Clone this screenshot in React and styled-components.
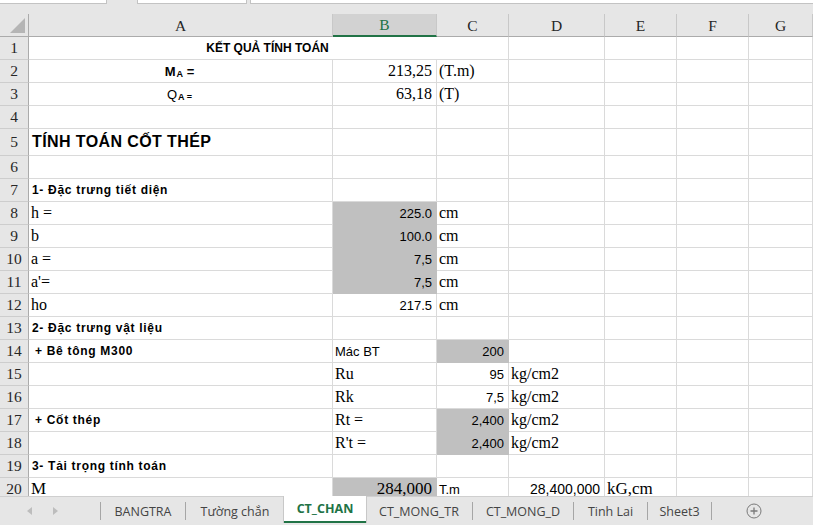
import React from 'react';
import styled, { createGlobalStyle } from 'styled-components';

const SERIF = '"Liberation Serif", "Times New Roman", serif';
const SANS = '"Liberation Sans", Arial, sans-serif';
const UI = '"Open Sans", "Noto Sans", sans-serif';
const COLS = '29px 304px 104px 72px 96px 72px 72px 1fr';
const GREEN = '#217346';

const Global = createGlobalStyle`
  html, body { margin: 0; padding: 0; background: #fff; overflow: hidden; }
  * { box-sizing: border-box; }
`;

const Window = styled.div`
  width: 813px;
  height: 525px;
  display: flex;
  flex-direction: column;
  overflow: hidden;
  background: #fff;
`;

const TopStrip = styled.div`
  height: 14px;
  flex-shrink: 0;
  display: flex;
  align-items: flex-start;
  background: #e6e6e6;
`;

const StripBox = styled.div`
  height: 4px;
  background: #fff;
  border-bottom: 1px solid #c3c3c3;
  border-left: ${p => (p.$left ? '1px solid #c3c3c3' : 'none')};
  border-right: ${p => (p.$right ? '1px solid #c3c3c3' : 'none')};
  width: ${p => (p.$w ? `${p.$w}px` : 'auto')};
  flex: ${p => (p.$w ? '0 0 auto' : '1')};
  margin-left: ${p => p.$gap || 0}px;
`;

const Sheet = styled.div`
  flex: 1;
  overflow: hidden;
`;

const Row = styled.div`
  display: grid;
  grid-template-columns: ${COLS};
  height: ${p => p.$h}px;
`;

const Corner = styled.div`
  background: #e6e6e6;
  border-right: 1px solid #ababab;
  border-bottom: 1px solid #ababab;
  display: flex;
  align-items: flex-end;
  justify-content: flex-end;
  padding: 0 3px 3px 0;
`;

const ColHead = styled.div`
  background: ${p => (p.$sel ? '#d2d2d2' : '#e6e6e6')};
  border-right: 1px solid #c8c8c8;
  border-bottom: ${p => (p.$sel ? `2px solid ${GREEN}` : '1px solid #ababab')};
  color: ${p => (p.$sel ? GREEN : '#262626')};
  font: 15.5px ${SERIF};
  display: flex;
  align-items: center;
  justify-content: center;
  padding-top: 1px;
`;

const RowHead = styled.div`
  background: #e6e6e6;
  border-right: 1px solid #ababab;
  border-bottom: 1px solid #cdcdcd;
  color: #262626;
  font: 15.5px ${SERIF};
  display: flex;
  align-items: center;
  justify-content: center;
`;

const Cell = styled.div`
  grid-column: span ${p => p.$span || 1};
  background: ${p => (p.$fill ? '#c0c0c0' : '#fff')};
  border-right: 1px solid ${p => (p.$fill ? '#c0c0c0' : '#dadada')};
  border-bottom: 1px solid ${p => (p.$fill ? '#c0c0c0' : '#dadada')};
  display: flex;
  align-items: center;
  justify-content: ${p => (p.$align === 'right' ? 'flex-end' : p.$align === 'center' ? 'center' : 'flex-start')};
  padding: 0 ${p => (p.$align === 'right' ? 4 : 2)}px 0 ${p => p.$indent ?? 2}px;
  font-family: ${p => (p.$serif ? SERIF : SANS)};
  font-size: ${p => p.$size || (p.$serif ? 16 : 13)}px;
  font-weight: ${p => (p.$bold ? 700 : 400)};
  letter-spacing: ${p => p.$ls || 0}px;
  color: #000;
  white-space: nowrap;
  overflow: visible;
`;

const Sub = styled.span`
  font-size: 9px;
  font-weight: 700;
  position: relative;
  top: 3px;
  margin-left: 1px;
`;

const TabBar = styled.div`
  height: 29px;
  flex-shrink: 0;
  display: flex;
  align-items: stretch;
  background: #e6e6e6;
  border-top: 1px solid #cfcfcf;
  font-family: ${UI};
`;

const Nav = styled.div`
  width: 100px;
  display: flex;
  align-items: center;
  padding-left: 27px;
  gap: 21px;
`;

const Sep = styled.div`
  width: 1px;
  height: 18px;
  align-self: center;
  background: #a6a6a6;
`;

const Tab = styled.div`
  width: ${p => p.$w}px;
  display: flex;
  align-items: center;
  justify-content: center;
  font-size: 12.5px;
  color: ${p => (p.$active ? GREEN : '#444')};
  font-weight: ${p => (p.$active ? 700 : 400)};
  background: ${p => (p.$active ? '#fff' : 'transparent')};
  border-bottom: ${p => (p.$active ? `2px solid ${GREEN}` : 'none')};
  margin-bottom: ${p => (p.$active ? 2 : 0)}px;
  margin-top: ${p => (p.$active ? -1 : 0)}px;
  box-shadow: ${p => (p.$active ? '1px 0 0 #c8c8c8, -1px 0 0 #c8c8c8' : 'none')};
`;

const AddBtn = styled.div`
  display: flex;
  align-items: center;
  margin-left: 34px;
`;

const Arrow = ({ dir }) => (
  <svg width="5" height="8" viewBox="0 0 5 8">
    <path d={dir === 'l' ? 'M5 0 L0 4 L5 8 Z' : 'M0 0 L5 4 L0 8 Z'} fill="#bdbdbd" />
  </svg>
);

const E = () => <Cell />;

const rowsData = [
  { n: 1, h: 23, cells: [
    <Cell key="a" $span={3} $align="center" $bold $size={12} $indent={0}>KẾT QUẢ TÍNH TOÁN</Cell>,
  ] },
  { n: 2, h: 23, cells: [
    <Cell key="a" $align="center" $bold $size={13} $indent={0}>M<Sub>A</Sub>&nbsp;=</Cell>,
    <Cell key="b" $align="right" $serif>213,25</Cell>,
    <Cell key="c" $serif>(T.m)</Cell>,
  ] },
  { n: 3, h: 23, cells: [
    <Cell key="a" $align="center" $size={13} $indent={0}>Q<Sub>A =</Sub></Cell>,
    <Cell key="b" $align="right" $serif>63,18</Cell>,
    <Cell key="c" $serif>(T)</Cell>,
  ] },
  { n: 4, h: 23, cells: [] },
  { n: 5, h: 27, cells: [
    <Cell key="a" $bold $size={16} $ls={0.4} $indent={3}>TÍNH TOÁN CỐT THÉP</Cell>,
  ] },
  { n: 6, h: 23, cells: [] },
  { n: 7, h: 23, cells: [
    <Cell key="a" $bold $size={12} $ls={0.7} $indent={3}>1- Đặc trưng tiết diện</Cell>,
  ] },
  { n: 8, h: 23, cells: [
    <Cell key="a" $serif>h =</Cell>,
    <Cell key="b" $align="right" $fill>225.0</Cell>,
    <Cell key="c" $serif>cm</Cell>,
  ] },
  { n: 9, h: 23, cells: [
    <Cell key="a" $serif>b</Cell>,
    <Cell key="b" $align="right" $fill>100.0</Cell>,
    <Cell key="c" $serif>cm</Cell>,
  ] },
  { n: 10, h: 23, cells: [
    <Cell key="a" $serif>a =</Cell>,
    <Cell key="b" $align="right" $fill>7,5</Cell>,
    <Cell key="c" $serif>cm</Cell>,
  ] },
  { n: 11, h: 23, cells: [
    <Cell key="a" $serif>a'=</Cell>,
    <Cell key="b" $align="right" $fill>7,5</Cell>,
    <Cell key="c" $serif>cm</Cell>,
  ] },
  { n: 12, h: 23, cells: [
    <Cell key="a" $serif>ho</Cell>,
    <Cell key="b" $align="right">217.5</Cell>,
    <Cell key="c" $serif>cm</Cell>,
  ] },
  { n: 13, h: 23, cells: [
    <Cell key="a" $bold $size={12} $ls={0.7} $indent={3}>2- Đặc trưng vật liệu</Cell>,
  ] },
  { n: 14, h: 23, cells: [
    <Cell key="a" $bold $size={12} $ls={0.7} $indent={6}>+ Bê tông M300</Cell>,
    <Cell key="b">Mác BT</Cell>,
    <Cell key="c" $align="right" $fill>200</Cell>,
  ] },
  { n: 15, h: 23, cells: [
    <Cell key="a" />,
    <Cell key="b" $serif>Ru</Cell>,
    <Cell key="c" $align="right">95</Cell>,
    <Cell key="d" $serif>kg/cm2</Cell>,
  ] },
  { n: 16, h: 23, cells: [
    <Cell key="a" />,
    <Cell key="b" $serif>Rk</Cell>,
    <Cell key="c" $align="right">7,5</Cell>,
    <Cell key="d" $serif>kg/cm2</Cell>,
  ] },
  { n: 17, h: 23, cells: [
    <Cell key="a" $bold $size={12} $ls={0.7} $indent={6}>+ Cốt thép</Cell>,
    <Cell key="b" $serif>Rt =</Cell>,
    <Cell key="c" $align="right" $fill>2,400</Cell>,
    <Cell key="d" $serif>kg/cm2</Cell>,
  ] },
  { n: 18, h: 23, cells: [
    <Cell key="a" />,
    <Cell key="b" $serif>R't =</Cell>,
    <Cell key="c" $align="right" $fill>2,400</Cell>,
    <Cell key="d" $serif>kg/cm2</Cell>,
  ] },
  { n: 19, h: 23, cells: [
    <Cell key="a" $bold $size={12} $ls={0.7} $indent={3}>3- Tải trọng tính toán</Cell>,
  ] },
  { n: 20, h: 23, cells: [
    <Cell key="a" $serif $size={17}>M</Cell>,
    <Cell key="b" $align="right" $fill $serif $size={17}>284,000</Cell>,
    <Cell key="c">T.m</Cell>,
    <Cell key="d" $align="right" $size={14}>28,400,000</Cell>,
    <Cell key="e" $serif $size={17}>kG,cm</Cell>,
  ] },
];

const colSpanCount = cells =>
  cells.reduce((s, c) => s + (c.props.$span || 1), 0);

const tabs = [
  { name: 'BANGTRA', w: 84, sep: true },
  { name: 'Tường chắn', w: 98, sep: false },
  { name: 'CT_CHAN', w: 82, active: true, sep: false },
  { name: 'CT_MONG_TR', w: 106, sep: true },
  { name: 'CT_MONG_D', w: 100, sep: true },
  { name: 'Tinh Lai', w: 73, sep: true },
  { name: 'Sheet3', w: 63, sep: true },
];

export default function App() {
  return (
    <>
      <Global />
      <Window>
        <TopStrip>
          <StripBox $w={107} $right />
          <StripBox $w={110} $gap={30} $left $right />
          <StripBox $gap={3} $left />
        </TopStrip>
        <Sheet>
          <Row $h={23}>
            <Corner>
              <svg width="15" height="15" viewBox="0 0 15 15">
                <path d="M15 0 L15 15 L0 15 Z" fill="#b5b5b5" />
              </svg>
            </Corner>
            {['A', 'B', 'C', 'D', 'E', 'F', 'G'].map(l => (
              <ColHead key={l} $sel={l === 'B'}>{l}</ColHead>
            ))}
          </Row>
          {rowsData.map(r => {
            const fill = 7 - colSpanCount(r.cells);
            return (
              <Row key={r.n} $h={r.h}>
                <RowHead>{r.n}</RowHead>
                {r.cells}
                {Array.from({ length: fill }).map((_, i) => <E key={`e${i}`} />)}
              </Row>
            );
          })}
        </Sheet>
        <TabBar>
          <Nav>
            <Arrow dir="l" />
            <Arrow dir="r" />
          </Nav>
          <Sep />
          {tabs.map(t => (
            <React.Fragment key={t.name}>
              <Tab $w={t.w} $active={t.active}>{t.name}</Tab>
              {t.sep && <Sep />}
            </React.Fragment>
          ))}
          <AddBtn>
            <svg width="16" height="16" viewBox="0 0 16 16">
              <circle cx="8" cy="8" r="7" fill="none" stroke="#7a7a7a" strokeWidth="1" />
              <path d="M8 4.5 V11.5 M4.5 8 H11.5" stroke="#7a7a7a" strokeWidth="1.3" />
            </svg>
          </AddBtn>
        </TabBar>
      </Window>
    </>
  );
}
